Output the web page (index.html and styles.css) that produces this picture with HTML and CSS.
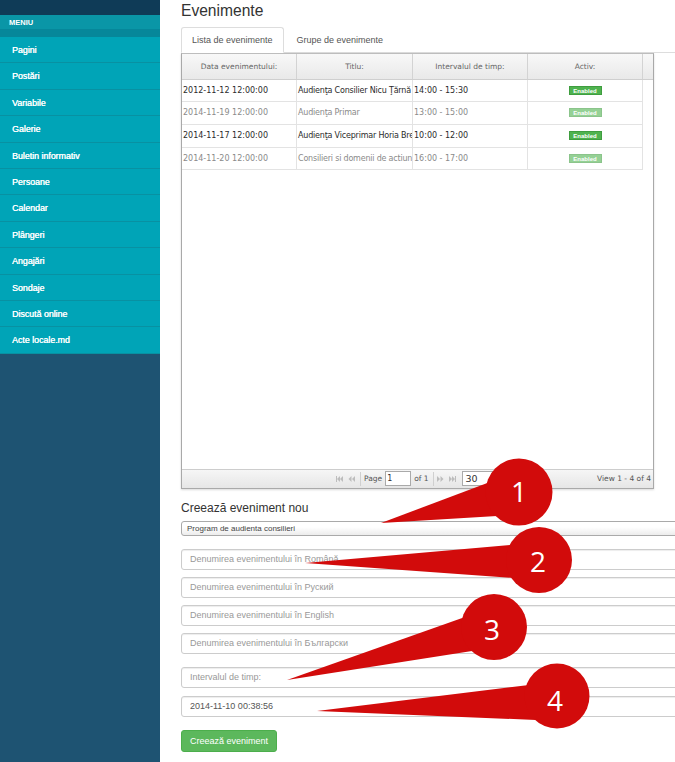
FILE: index.html
```html
<!DOCTYPE html>
<html lang="ro">
<head>
<meta charset="utf-8">
<title>Evenimente</title>
<link rel="stylesheet" href="styles.css">
</head>
<body>
<div class="page">
  <aside class="sidebar">
    <div class="brand"></div>
    <div class="menu-title">MENIU</div>
    <div class="menu-strip"></div>
    <ul class="menu">
      <li>Pagini</li>
      <li>Postări</li>
      <li>Variabile</li>
      <li>Galerie</li>
      <li>Buletin informativ</li>
      <li>Persoane</li>
      <li>Calendar</li>
      <li>Plângeri</li>
      <li>Angajări</li>
      <li>Sondaje</li>
      <li>Discută online</li>
      <li>Acte locale.md</li>
    </ul>
  </aside>
  <main class="main">
    <h1 class="title">Evenimente</h1>
    <ul class="tabs">
      <li class="tab active">Lista de evenimente</li>
      <li class="tab">Grupe de evenimente</li>
    </ul>
    <div class="grid">
      <div class="grid-head">
        <div class="th">Data evenimentului:</div>
        <div class="th">Titlu:</div>
        <div class="th">Intervalul de timp:</div>
        <div class="th">Activ:</div>
        <div class="th th-scroll"></div>
      </div>
      <div class="grid-body">
        <div class="row dark">
          <div class="td">2012-11-12 12:00:00</div>
          <div class="td td-title">Audienţa Consilier Nicu Ţărnă</div>
          <div class="td">14:00 - 15:30</div>
          <div class="td td-badge"><span class="badge">Enabled</span></div>
        </div>
        <div class="row light">
          <div class="td">2014-11-19 12:00:00</div>
          <div class="td td-title">Audienţa Primar</div>
          <div class="td">13:00 - 15:00</div>
          <div class="td td-badge"><span class="badge">Enabled</span></div>
        </div>
        <div class="row dark">
          <div class="td">2014-11-17 12:00:00</div>
          <div class="td td-title">Audienţa Viceprimar Horia Brescanu</div>
          <div class="td">10:00 - 12:00</div>
          <div class="td td-badge"><span class="badge">Enabled</span></div>
        </div>
        <div class="row light">
          <div class="td">2014-11-20 12:00:00</div>
          <div class="td td-title">Consilieri si domenii de actiune</div>
          <div class="td">16:00 - 17:00</div>
          <div class="td td-badge"><span class="badge">Enabled</span></div>
        </div>
      </div>
      <div class="pager">
        <div class="pg-center">
          <span class="pg-btn"><svg width="7" height="6" viewBox="0 0 7 6"><rect x="0" y="0" width="1" height="6"/><polygon points="4,0 1,3 4,6"/><polygon points="7,0 4,3 7,6"/></svg></span>
          <span class="pg-btn"><svg width="7" height="6" viewBox="0 0 7 6"><polygon points="3.5,0 0.5,3 3.5,6"/><polygon points="7,0 4,3 7,6"/></svg></span>
          <span class="pg-sep"></span>
          <span class="pg-label">Page</span>
          <span class="pg-input">1</span>
          <span class="pg-label pg-of">of 1</span>
          <span class="pg-sep"></span>
          <span class="pg-btn"><svg width="7" height="6" viewBox="0 0 7 6"><polygon points="0,0 3,3 0,6"/><polygon points="3.5,0 6.5,3 3.5,6"/></svg></span>
          <span class="pg-btn"><svg width="7" height="6" viewBox="0 0 7 6"><polygon points="0,0 3,3 0,6"/><polygon points="3,0 6,3 3,6"/><rect x="6" y="0" width="1" height="6"/></svg></span>
          <span class="pg-select">30</span>
        </div>
        <div class="pg-right">View 1 - 4 of 4</div>
      </div>
    </div>
    <h2 class="form-title">Creează eveniment nou</h2>
    <div class="form">
      <div class="select">Program de audienta consilieri</div>
      <input class="field" type="text" placeholder="Denumirea evenimentului în Română">
      <input class="field" type="text" placeholder="Denumirea evenimentului în Руский">
      <input class="field" type="text" placeholder="Denumirea evenimentului în English">
      <input class="field field-gap" type="text" placeholder="Denumirea evenimentului în Български">
      <input class="field field-mid" type="text" placeholder="Intervalul de timp:">
      <input class="field field-gap" type="text" value="2014-11-10 00:38:56">
      <button class="btn" type="button">Creează eveniment</button>
    </div>
  </main>
</div>
<svg class="callouts" width="675" height="762" viewBox="0 0 675 762">
  <g class="callout">
    <polygon points="381,523 490,482 497,516"/>
    <circle cx="519" cy="492" r="33.5"/>
    <text x="519" y="502">1</text>
  </g>
  <g class="callout">
    <polygon points="305,563 510,545 514,578"/>
    <circle cx="539" cy="560" r="33"/>
    <text x="538" y="572">2</text>
  </g>
  <g class="callout">
    <polygon points="287,680 465,617 472,651"/>
    <circle cx="494" cy="627" r="33"/>
    <text x="492" y="640">3</text>
  </g>
  <g class="callout">
    <polygon points="317,711 529,685 536,720"/>
    <circle cx="557" cy="696" r="32.5"/>
    <text x="555" y="711">4</text>
  </g>
</svg>
</body>
</html>
```

FILE: styles.css
```css
* { box-sizing: border-box; }
html, body { margin: 0; padding: 0; }
body {
  width: 675px;
  height: 762px;
  overflow: hidden;
  position: relative;
  background: #fff;
  font-family: "Liberation Sans", Arial, sans-serif;
}
.page { display: flex; height: 762px; }

/* Sidebar */
.sidebar { width: 160px; flex: none; background: #1e5372; }
.brand { height: 15px; background: #0f3b57; }
.menu-title {
  height: 14px;
  line-height: 15px;
  padding-left: 9px;
  background: #0a96a7;
  color: #fff;
  font-size: 7.5px;
  font-weight: bold;
}
.menu-strip { height: 8px; background: #06879a; }
.menu { list-style: none; margin: 0; padding: 0; }
.menu li {
  height: 26.4px;
  line-height: 26px;
  padding-left: 12px;
  background: #00a4b7;
  border-bottom: 1px solid #0891a2;
  color: #fff;
  font-size: 8.8px;
  text-shadow: 0.35px 0 0 #fff;
}

/* Main */
.main { flex: 1; min-width: 0; padding-left: 21px; }
.title {
  margin: 2px 0 0;
  font-size: 15.6px;
  line-height: 18px;
  font-weight: normal;
  color: #333;
}
.tabs {
  display: flex;
  list-style: none;
  margin: 6.7px 0 0;
  padding: 0;
  border-bottom: 1px solid #ddd;
}
.tab {
  padding: 6.5px 10px 4.5px;
  margin-right: 2px;
  margin-bottom: -1px;
  font-size: 9px;
  line-height: 13px;
  color: #555;
  border: 1px solid transparent;
  border-radius: 3px 3px 0 0;
}
.tab.active { border-color: #ddd #ddd transparent; background: #fff; }

/* Grid */
.grid {
  width: 473px;
  border: 1px solid #a9a9a9;
  border-top-color: #bdbdbd;
  box-shadow: 0 1px 2px rgba(0,0,0,0.15);
  font-family: "DejaVu Sans", Verdana, sans-serif;
}
.grid-head {
  display: grid;
  grid-template-columns: 115px 116px 115px 115px 1fr;
  height: 26px;
  background: linear-gradient(#f8f8f8, #e9e9e9);
  border-bottom: 1px solid #cfcfcf;
}
.th {
  display: flex;
  align-items: center;
  justify-content: center;
  font-size: 7.5px;
  color: #666;
  border-right: 1px solid #d3d3d3;
}
.th-scroll { border-right: none; }
.grid-body { height: 389px; }
.row {
  display: grid;
  grid-template-columns: 115px 116px 115px 115px;
  width: 461px;
  height: 22.7px;
  border-bottom: 1px solid #e3e3e3;
}
.td {
  padding: 0 1px;
  font-size: 8px;
  line-height: 21.7px;
  white-space: nowrap;
  overflow: hidden;
  border-right: 1px solid #e3e3e3;
}
.td-title { letter-spacing: -0.2px; }
.row.dark .td { color: #2b2b2b; }
.row.light .td { color: #8a8a8a; }
.td-badge { text-align: center; }
.badge {
  display: inline-block;
  width: 33px;
  height: 9px;
  line-height: 8px;
  vertical-align: middle;
  background: #4fb34f;
  border: 1px solid #3f9d3f;
  color: #fff;
  font-family: "Liberation Sans", Arial, sans-serif;
  font-size: 6px;
  font-weight: bold;
  text-align: center;
}
.row.light .badge { opacity: 0.6; }

.pager {
  display: flex;
  align-items: center;
  height: 19px;
  border-top: 1px solid #cdcdcd;
  background: linear-gradient(#f6f6f6, #e6e6e6);
  font-size: 7.5px;
  color: #555;
}
.pg-center { display: flex; align-items: center; margin-left: 154px; }
.pg-btn { width: 12px; display: flex; align-items: center; }
.pg-btn svg { fill: #bdbdbd; }
.pg-sep { width: 1px; height: 14px; background: #d0d0d0; margin: 0 3px 0 0; }
.pg-label { margin-right: 3px; }
.pg-of { margin-right: 4px; }
.pg-input {
  width: 26px;
  height: 15px;
  margin-right: 3px;
  padding-left: 1px;
  border: 1px solid #aaa;
  background: #fff;
  color: #333;
  font-size: 8px;
  line-height: 13px;
}
.pg-select {
  width: 40px;
  height: 15px;
  margin-left: 1px;
  padding-left: 3px;
  border: 1px solid #aaa;
  background: #fff;
  color: #333;
  font-size: 9.5px;
  line-height: 13px;
}
.pg-right { margin-left: auto; padding-right: 2px; }

/* Form */
.form-title {
  margin: 11.8px 0 4.2px;
  font-size: 12px;
  line-height: 16px;
  font-weight: normal;
  color: #333;
}
.form { width: 540px; }
.select {
  height: 15px;
  margin-bottom: 13px;
  padding-left: 5px;
  border: 1px solid #aaa;
  border-radius: 3px;
  background: linear-gradient(#fff 40%, #ececec);
  font-size: 8px;
  line-height: 13px;
  color: #444;
}
.field {
  display: block;
  width: 100%;
  height: 21px;
  margin: 0 0 7px;
  padding: 0 8px;
  border: 1px solid #ccc;
  border-radius: 3px;
  box-shadow: inset 0 1px 1px rgba(0,0,0,0.075);
  background: #fff;
  font-family: "Liberation Sans", Arial, sans-serif;
  font-size: 9px;
  color: #555;
  outline: none;
}
.field::placeholder { color: #999; }
.field-gap { margin-bottom: 13px; }
.field-mid { margin-bottom: 8px; }
.btn {
  display: block;
  height: 22px;
  padding: 0 8px;
  border: 1px solid #4cae4c;
  border-radius: 3px;
  background: #5cb85c;
  color: #fff;
  font-family: "Liberation Sans", Arial, sans-serif;
  font-size: 9px;
}

/* Callouts overlay */
.callouts {
  position: absolute;
  left: 0;
  top: 0;
  pointer-events: none;
}
.callout polygon, .callout circle { fill: #d20b0b; }
.callout text {
  fill: #fff;
  font-family: "Open Sans", "Liberation Sans", sans-serif;
  font-size: 28px;
  text-anchor: middle;
}
```
